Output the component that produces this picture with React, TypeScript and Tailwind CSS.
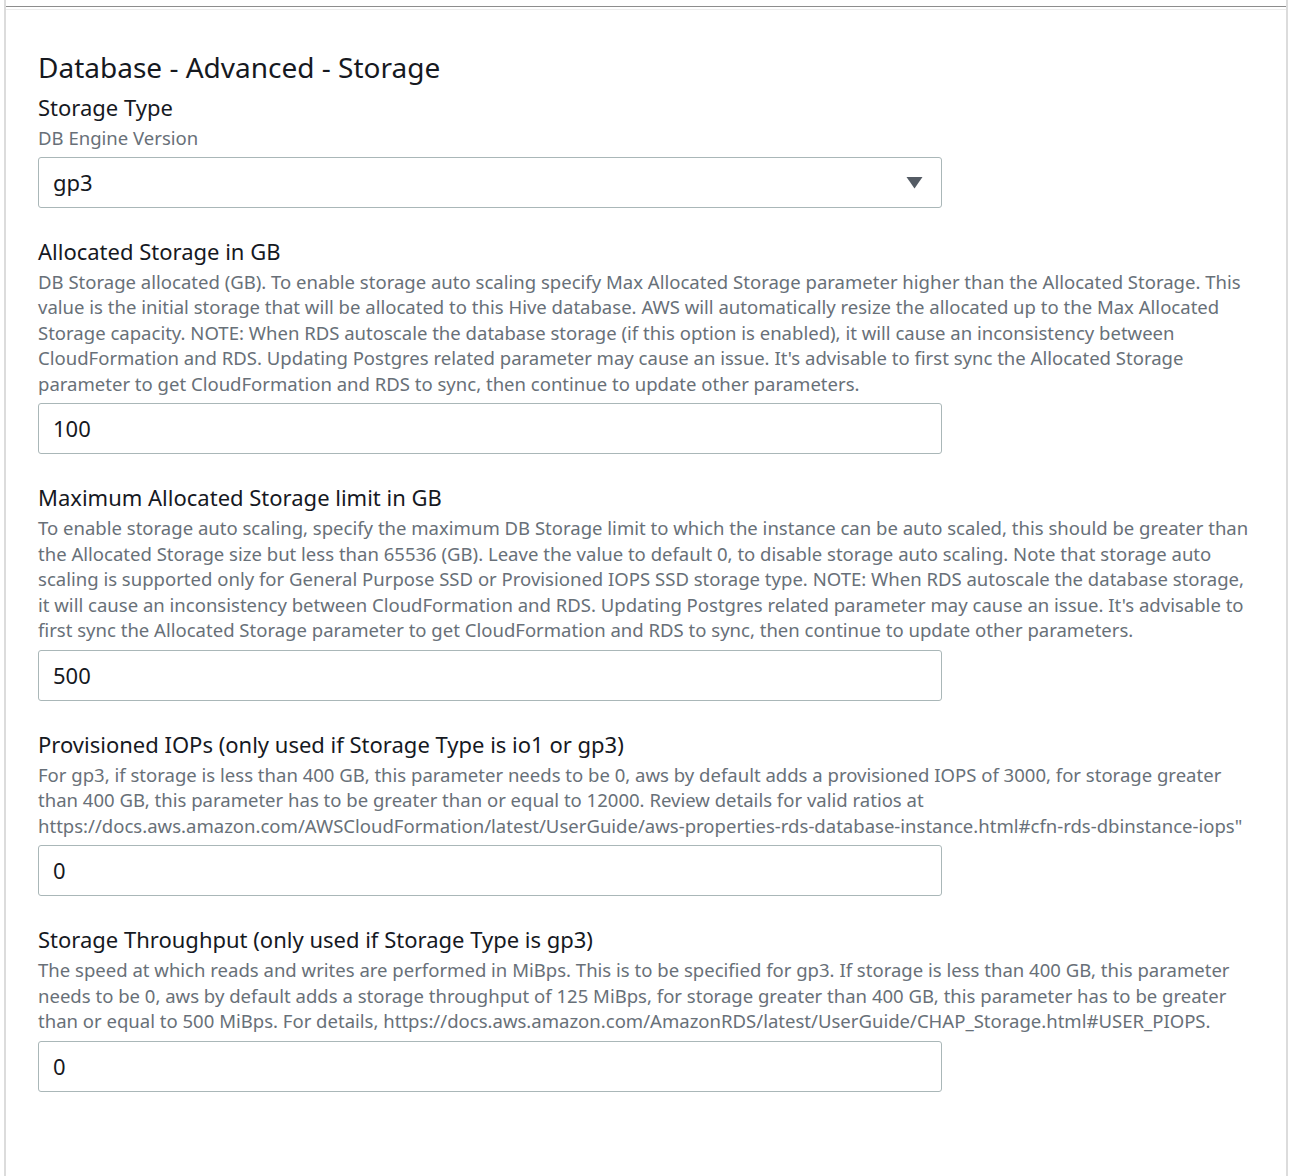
const fields = [
  {
    label: "Allocated Storage in GB",
    desc: "DB Storage allocated (GB). To enable storage auto scaling specify Max Allocated Storage parameter higher than the Allocated Storage. This value is the initial storage that will be allocated to this Hive database. AWS will automatically resize the allocated up to the Max Allocated Storage capacity. NOTE: When RDS autoscale the database storage (if this option is enabled), it will cause an inconsistency between CloudFormation and RDS. Updating Postgres related parameter may cause an issue. It's advisable to first sync the Allocated Storage parameter to get CloudFormation and RDS to sync, then continue to update other parameters.",
    value: "100",
  },
  {
    label: "Maximum Allocated Storage limit in GB",
    desc: "To enable storage auto scaling, specify the maximum DB Storage limit to which the instance can be auto scaled, this should be greater than the Allocated Storage size but less than 65536 (GB). Leave the value to default 0, to disable storage auto scaling. Note that storage auto scaling is supported only for General Purpose SSD or Provisioned IOPS SSD storage type. NOTE: When RDS autoscale the database storage, it will cause an inconsistency between CloudFormation and RDS. Updating Postgres related parameter may cause an issue. It's advisable to first sync the Allocated Storage parameter to get CloudFormation and RDS to sync, then continue to update other parameters.",
    value: "500",
  },
  {
    label: "Provisioned IOPs (only used if Storage Type is io1 or gp3)",
    desc: 'For gp3, if storage is less than 400 GB, this parameter needs to be 0, aws by default adds a provisioned IOPS of 3000, for storage greater than 400 GB, this parameter has to be greater than or equal to 12000. Review details for valid ratios at https://docs.aws.amazon.com/AWSCloudFormation/latest/UserGuide/aws-properties-rds-database-instance.html#cfn-rds-dbinstance-iops"',
    value: "0",
  },
  {
    label: "Storage Throughput (only used if Storage Type is gp3)",
    desc: "The speed at which reads and writes are performed in MiBps. This is to be specified for gp3. If storage is less than 400 GB, this parameter needs to be 0, aws by default adds a storage throughput of 125 MiBps, for storage greater than 400 GB, this parameter has to be greater than or equal to 500 MiBps. For details, https://docs.aws.amazon.com/AmazonRDS/latest/UserGuide/CHAP_Storage.html#USER_PIOPS.",
    value: "0",
  },
];

function Label({ children }: { children: React.ReactNode }) {
  return <div className="text-[22px] leading-[28px] font-normal text-[#16191f] mb-[4px]">{children}</div>;
}

function Desc({ children }: { children: React.ReactNode }) {
  return <div className="text-[18.55px] leading-[25.5px] text-[#687078] mb-[7px] break-words">{children}</div>;
}

export default function App() {
  return (
    <div className="bg-white min-h-[1176px] pl-[4px]" style={{ fontFamily: '"Noto Sans", "Open Sans", sans-serif' }}>
      <div className="w-[1284px] min-h-[1176px] border-l-2 border-r-2 border-[#dcdcdc]">
        <div className="h-[6px]" />
        <div className="h-px bg-[#8d8d8d]" />
        <div className="h-[2px]" />
        <div className="h-px bg-[#ececec]" />
        <div className="px-[32px] pt-[39px] pb-[80px]">
          <h2 className="text-[28px] leading-[36px] font-normal text-[#16191f] mb-[8px]">Database - Advanced - Storage</h2>

          <Label>Storage Type</Label>
          <Desc>DB Engine Version</Desc>
          <div className="w-[904px] h-[51px] border border-[#aab7b8] rounded-[3px] flex items-center justify-between pl-[14px] pr-[18px] -mt-px">
            <span className="text-[22px] text-[#16191f]">gp3</span>
            <svg width="17" height="13" viewBox="0 0 17 13" className="text-[#545b64]">
              <path d="M0.5 1 L16.5 1 L8.5 12.5 Z" fill="currentColor" />
            </svg>
          </div>

          {fields.map((f) => (
            <div key={f.label} className="mt-[29px]">
              <Label>{f.label}</Label>
              <Desc>{f.desc}</Desc>
              <div className="w-[904px] h-[51px] border border-[#aab7b8] rounded-[3px] flex items-center pl-[14px]">
                <span className="text-[22px] text-[#16191f]">{f.value}</span>
              </div>
            </div>
          ))}
        </div>
      </div>
    </div>
  );
}
